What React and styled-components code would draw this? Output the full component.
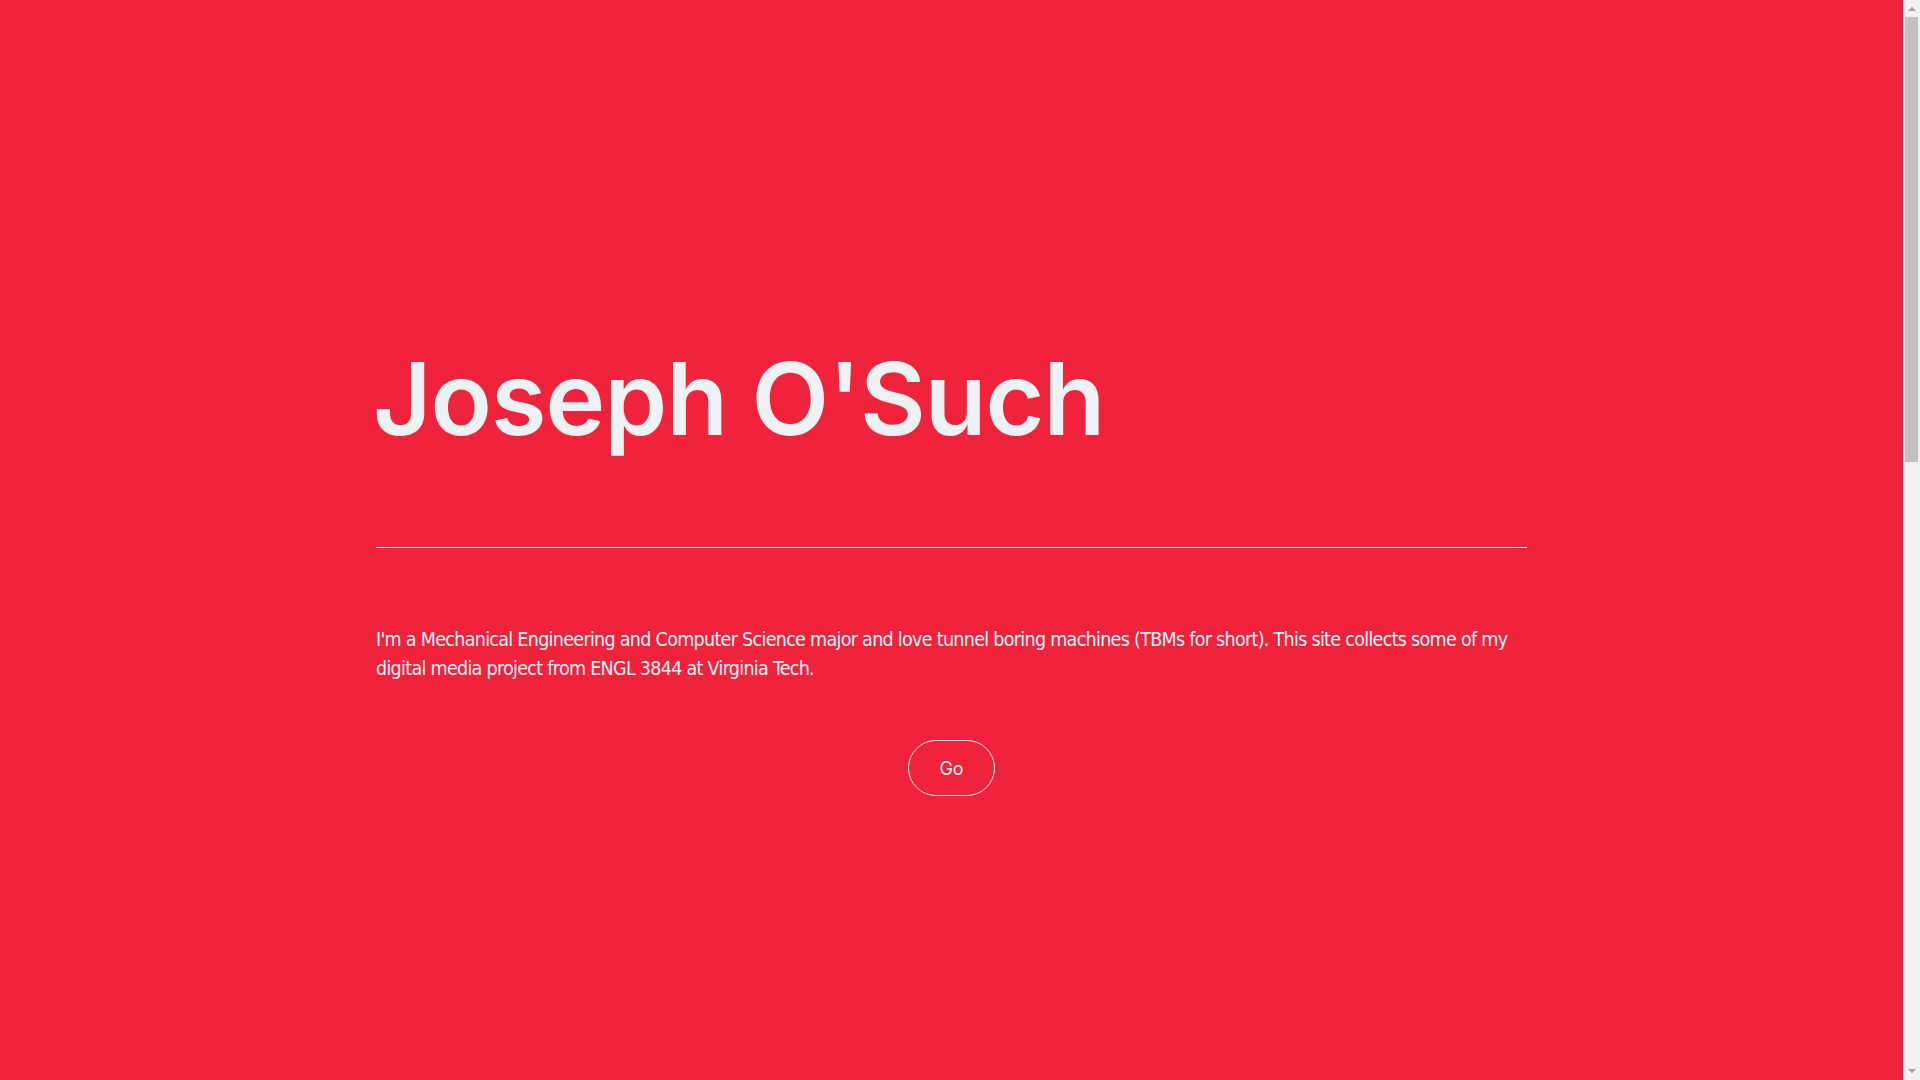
import React from 'react';
import styled, { createGlobalStyle } from 'styled-components';

const GlobalStyle = createGlobalStyle`
  html, body {
    margin: 0;
    padding: 0;
    background: #ef233c;
  }
  body {
    font-family: Inter, "Liberation Sans", sans-serif;
    color: #edf2f4;
  }
`;

const Page = styled.div`
  min-height: 2540px;
  margin-right: 17px;
  background: #ef233c;
`;

const Hero = styled.section`
  max-width: 1151px;
  margin: 0 auto;
  padding-top: 338px;
  display: flex;
  flex-direction: column;
`;

const Name = styled.h1`
  margin: 0 0 0 -3px;
  font-family: Inter, "Liberation Sans", sans-serif;
  font-weight: 600;
  font-size: 101px;
  line-height: 1.2;
  letter-spacing: -1px;
  color: #edf2f4;
`;

const Rule = styled.hr`
  width: 100%;
  margin: 88px 0 0;
  border: none;
  border-top: 1px solid #edf2f4;
`;

const Intro = styled.p`
  margin: 77px 0 0;
  font-family: "DejaVu Sans", sans-serif;
  font-stretch: condensed;
  font-size: 19.5px;
  line-height: 29px;
  letter-spacing: -0.7px;
  color: #edf2f4;
`;

const Actions = styled.div`
  display: flex;
  justify-content: center;
  margin-top: 57px;
`;

const GoButton = styled.button`
  width: 87px;
  height: 56px;
  border: 1px solid #edf2f4;
  border-radius: 28px;
  background: transparent;
  color: #edf2f4;
  font-family: Inter, "Liberation Sans", sans-serif;
  font-size: 18px;
  cursor: pointer;
`;

/* stand-in for the browser's classic scrollbar */
const ScrollTrack = styled.div`
  position: fixed;
  top: 0;
  right: 0;
  bottom: 0;
  width: 17px;
  background: #f1f1f1;
  display: flex;
  flex-direction: column;
`;

const ScrollArrow = styled.div`
  height: 17px;
  flex: none;
  display: flex;
  align-items: center;
  justify-content: center;
  color: #a3a3a3;
  margin-top: ${(p) => (p.down ? 'auto' : '0')};

  svg {
    width: 8px;
    height: 5px;
  }
`;

const ScrollThumb = styled.div`
  height: 445px;
  margin: 0 2px;
  background: #c1c1c1;
`;

const Arrow = ({ down }) => (
  <ScrollArrow down={down ? 1 : 0}>
    <svg viewBox="0 0 8 5">
      <path d={down ? 'M0 0h8L4 4.5z' : 'M0 5h8L4 0.5z'} fill="currentColor" />
    </svg>
  </ScrollArrow>
);

export default function App() {
  return (
    <Page>
      <GlobalStyle />
      <Hero>
        <Name>Joseph O'Such</Name>
        <Rule />
        <Intro>
          I'm a Mechanical Engineering and Computer Science major and love tunnel boring machines (TBMs for
          short). This site collects some of my digital media project from ENGL 3844 at Virginia Tech.
        </Intro>
        <Actions>
          <GoButton>Go</GoButton>
        </Actions>
      </Hero>
      <ScrollTrack>
        <Arrow />
        <ScrollThumb />
        <Arrow down />
      </ScrollTrack>
    </Page>
  );
}
